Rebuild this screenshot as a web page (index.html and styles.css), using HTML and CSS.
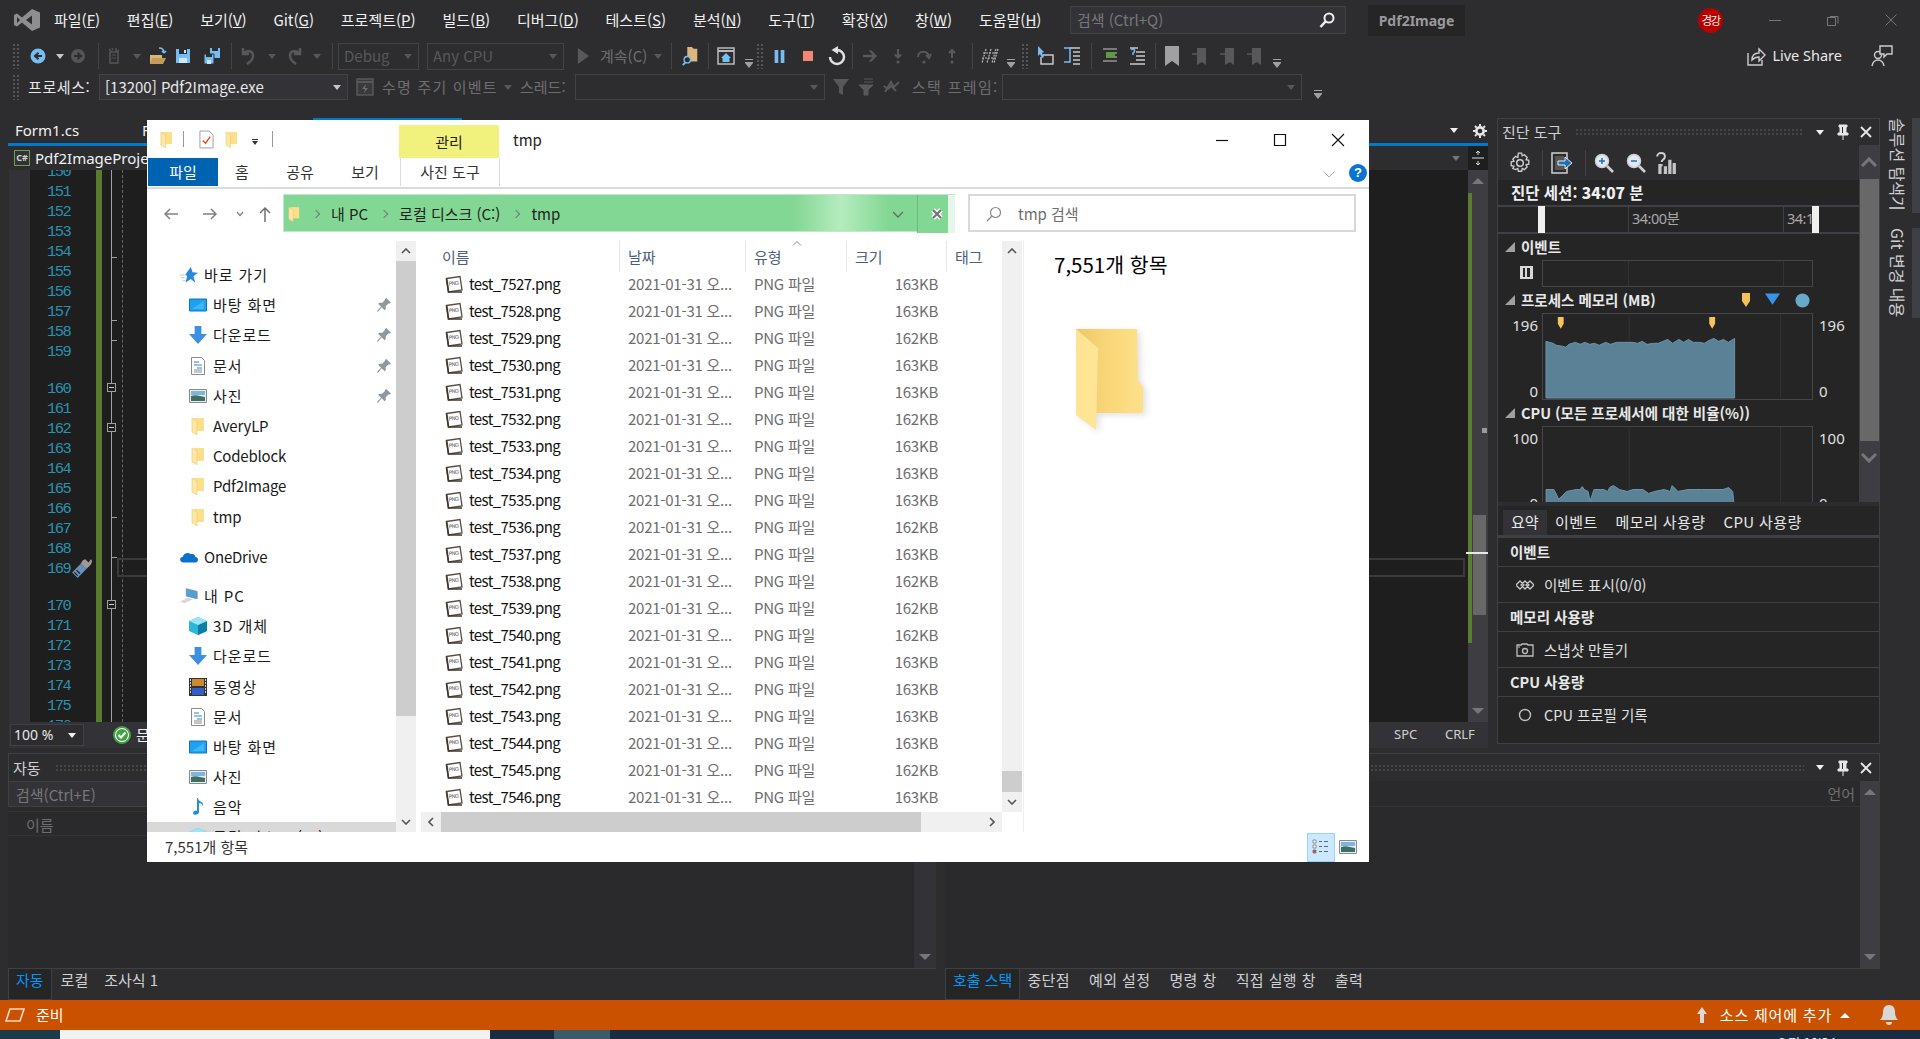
FILE: index.html
```html
<!DOCTYPE html>
<html lang="ko">
<head>
    <meta charset="UTF-8">
    <title>Pdf2Image - Microsoft Visual Studio</title>
    <link rel="stylesheet" href="styles.css">
</head>
<body>
<svg class="defs" aria-hidden="true">
    <defs>
        <linearGradient id="fold-back" x1="0" x2="1" y1="0" y2="0"><stop offset="0" stop-color="#eec766"/><stop offset=".45" stop-color="#f8d678"/><stop offset="1" stop-color="#ffe08a"/></linearGradient>
    </defs>
    <symbol id="i-vs" viewBox="0 0 26 22"><path fill="#8e8e90" d="M18 0l8 3.500v15L18 22 8 13.500 3 17.500 0 16V6l3-1.500 5 4zM3 8v6l3-3zm15-1.500L12 11l6 4.500z"/></symbol>
    <symbol id="i-back" viewBox="0 0 16 16"><circle cx="8" cy="8" r="7.500" fill="#75bdf2"/><path d="M12 8H6M8.500 4.800L5 8l3.500 3.200" fill="none" stroke="#2d2d30" stroke-width="2"/></symbol>
    <symbol id="i-fwd" viewBox="0 0 16 16"><circle cx="8" cy="8" r="7" fill="#555558"/><path d="M4 8h6M7.500 4.800L11 8l-3.500 3.200" fill="none" stroke="#2d2d30" stroke-width="2"/></symbol>
    <symbol id="i-new" viewBox="0 0 16 18"><path d="M3 5h8v11H3z" fill="none" stroke="#555558" stroke-width="1.500"/><path d="M5 1l1 2M9 1v3M12 3l-2 2M2 2l2 2" stroke="#555558" stroke-width="1.500"/><path d="M5 8h4M5 11h4" stroke="#555558"/></symbol>
    <symbol id="i-open" viewBox="0 0 18 18"><path d="M1 8h12v9H1z" fill="#dcb67a"/><path d="M3 11h14l-3 6H1z" fill="#c59b58"/><path d="M10 1c3 0 5 2 5 5M15 6l-2-2m2 2l2-2" fill="none" stroke="#75bdf2" stroke-width="1.600"/></symbol>
    <symbol id="i-save" viewBox="0 0 16 16"><path d="M1 1h14v14H1z" fill="#75bdf2"/><path d="M4 1h8v5H4z" fill="#2d2d30"/><path d="M9 2h2v3H9zM4 10h8v5H4z" fill="#cfe6f8"/></symbol>
    <symbol id="i-saveall" viewBox="0 0 16 16"><path d="M6 0h10v10H6z" fill="#75bdf2"/><path d="M8 0h6v3H8z" fill="#2d2d30"/><path d="M0 6h10v10H0z" fill="#75bdf2" stroke="#2d2d30"/><path d="M2 6h6v3H2z" fill="#2d2d30"/><path d="M3 12h4v4H3z" fill="#cfe6f8"/></symbol>
    <symbol id="i-undo" viewBox="0 0 16 18"><path d="M3 1v6h6M3.500 7C6 3 13 3 13 9c0 4-3 6-6 8" fill="none" stroke="#58585b" stroke-width="2.500"/></symbol>
    <symbol id="i-redo" viewBox="0 0 16 18"><path d="M13 1v6H7M12.500 7C10 3 3 3 3 9c0 4 3 6 6 8" fill="none" stroke="#58585b" stroke-width="2.500"/></symbol>
    <symbol id="i-play" viewBox="0 0 16 18"><path d="M3 1l11 8-11 8z" fill="#58585b"/></symbol>
    <symbol id="i-find" viewBox="0 0 18 22"><path d="M6 1h5l2 2h4v14H6z" fill="#dcb67a"/><circle cx="6" cy="15" r="3.500" fill="#2d2d30" stroke="#75bdf2" stroke-width="1.500"/><path d="M4 18l-3 3" stroke="#75bdf2" stroke-width="2"/></symbol>
    <symbol id="i-browser" viewBox="0 0 18 18"><path d="M1 1h16v16H1z" fill="none" stroke="#bbb" stroke-width="1.500"/><path d="M1 4h16" stroke="#bbb" stroke-width="2"/><path d="M9 6l-5 5h1.500v4h7v-4H14z" fill="#75bdf2"/></symbol>
    <symbol id="i-pause" viewBox="0 0 16 16"><path d="M2 0h4.500v16H2zM9.500 0H14v16H9.500z" fill="#75bdf2"/></symbol>
    <symbol id="i-stop" viewBox="0 0 16 16"><path d="M0 0h16v16H0z" fill="#f48771"/></symbol>
    <symbol id="i-restart" viewBox="0 0 18 20"><path d="M9 4a7 7 0 1 1-7 7" fill="none" stroke="#e0e0e0" stroke-width="2.500"/><path d="M3.500 4L10 0v8z" fill="#e0e0e0"/></symbol>
    <symbol id="i-right" viewBox="0 0 16 16"><path d="M1 8h12M8 2.500L13.500 8 8 13.500" fill="none" stroke="#58585b" stroke-width="2.400"/></symbol>
    <symbol id="i-down" viewBox="0 0 16 16"><circle cx="8" cy="14" r="1.600" fill="#58585b"/><path d="M8 1v8M5 6.500l3 3 3-3" fill="none" stroke="#58585b" stroke-width="2"/></symbol>
    <symbol id="i-over" viewBox="0 0 16 16"><circle cx="8" cy="14" r="1.600" fill="#58585b"/><path d="M2 9c0-7 10-7 11 0M10 7l3 3 2-4" fill="none" stroke="#58585b" stroke-width="2"/></symbol>
    <symbol id="i-up" viewBox="0 0 16 16"><circle cx="8" cy="14" r="1.600" fill="#58585b"/><path d="M8 10V2M5 5l3-3 3 3" fill="none" stroke="#58585b" stroke-width="2"/></symbol>
    <symbol id="i-hatch" viewBox="0 0 18 18"><path d="M5 2L1 16M10 2L6 16M15 2l-4 14M17 2l-4 14M2 6h15M1 11h15" stroke="#b8b8b8" stroke-width="1.200" stroke-dasharray="2 1" fill="none"/></symbol>
    <symbol id="i-thread" viewBox="0 0 18 20"><path d="M2 0l6 6-2 1 2 4-2 1-2-4-2 2z" fill="#75bdf2"/><path d="M7 9h10v9H5v-7" fill="none" stroke="#c8c8c8" stroke-width="1.500"/></symbol>
    <symbol id="i-frames" viewBox="0 0 18 20"><path d="M1 2h6v14H1" fill="none" stroke="#75bdf2" stroke-width="1.500"/><path d="M7 2h10M10 6h7M10 10h7M10 14h7M10 18h7" stroke="#c8c8c8" stroke-width="1.500"/></symbol>
    <symbol id="i-lines1" viewBox="0 0 16 16"><path d="M1 1h14M4 5h11M4 9h11M1 13h14" stroke="#c8c8c8" stroke-width="1.200"/><path d="M4 4h9v5H4z" fill="#5a9e3a"/></symbol>
    <symbol id="i-lines2" viewBox="0 0 16 18"><path d="M1 1h8M7 5h9M7 9h9M7 13h9M1 17h15" stroke="#c8c8c8" stroke-width="1.500"/><path d="M2 3c3-3 5 1 2 3v2" fill="none" stroke="#75bdf2" stroke-width="1.500"/></symbol>
    <symbol id="i-bookmark" viewBox="0 0 16 20"><path d="M1 0h14v20l-7-5-7 5z" fill="#a0a0a2"/></symbol>
    <symbol id="i-bmk2" viewBox="0 0 16 20"><path d="M5 2h9v17l-4-3-5 3z" fill="#58585b"/><path d="M0 8h8M5 5l3 3-3 3" fill="none" stroke="#58585b" stroke-width="1.500"/></symbol>
    <symbol id="i-share" viewBox="0 0 18 20"><path d="M1 7v12h14v-5" fill="none" stroke="#ccc" stroke-width="1.400"/><path d="M5 14c0-5 3-7 7-7V3l6 6-6 6v-4c-3 0-5 1-7 3z" fill="none" stroke="#ccc" stroke-width="1.400"/></symbol>
    <symbol id="i-feedback" viewBox="0 0 22 22"><circle cx="7" cy="10" r="3.500" fill="none" stroke="#ccc" stroke-width="1.400"/><path d="M1 21c1-5 3-6 6-6s5 1 6 6" fill="none" stroke="#ccc" stroke-width="1.400"/><path d="M9 1h12v8h-5l-3 3V9H9z" fill="#2d2d30" stroke="#ccc" stroke-width="1.400"/></symbol>
    <symbol id="i-funnel" viewBox="0 0 16 18"><path d="M0 1h16l-6 8v8l-4-2V9z" fill="#58585b"/></symbol>
    <symbol id="i-funnel2" viewBox="0 0 18 18"><path d="M1 7h14l-5 5v5H6v-5zM6 1h9M6 4h9" fill="#58585b" stroke="#58585b"/></symbol>
    <symbol id="i-hide" viewBox="0 0 18 14"><path d="M2 12L8 2l3 5 5-5M1 6l4 3 3-3 5 5" fill="none" stroke="#58585b" stroke-width="2"/></symbol>
    <symbol id="i-life" viewBox="0 0 18 18"><path d="M1 1h16v16H1z" fill="#3a3a3d" stroke="#58585b" stroke-width="1.500"/><path d="M1 4h16" stroke="#58585b" stroke-width="2"/><path d="M10 6l-4 5h3l-1 4 4-5H9z" fill="#6d6d70"/></symbol>
    <symbol id="i-pin" viewBox="0 0 12 16"><path d="M2 1h8v2H9v6h2v2H1V9h2V3H2zM6 11v5" fill="#e8e8e8" stroke="#e8e8e8"/><path d="M5 3h1v6H5z" fill="#2d2d30"/></symbol>
    <symbol id="i-x" viewBox="0 0 12 12"><path d="M1 1l10 10M11 1L1 11" stroke="#e8e8e8" stroke-width="1.800" fill="none"/></symbol>
    <symbol id="i-gear" viewBox="0 0 20 20"><circle cx="10" cy="10" r="3" fill="none" stroke="#d0d0d0" stroke-width="1.300"/><path d="M8.500 1h3l.5 2.500 2-1 2.500 2.500-1 2 2.500.5v3.500l-2.500.5 1 2-2.500 2.500-2-1-.5 2.500h-3l-.5-2.500-2 1L3.500 15l1-2L2 12.500V9l2.500-.5-1-2L6 4l2 1z" fill="none" stroke="#d0d0d0" stroke-width="1.200"/></symbol>
    <symbol id="i-gear-s" viewBox="0 0 16 16"><circle cx="8" cy="8" r="4.200" fill="none" stroke="#e8e8e8" stroke-width="3"/><path d="M8 0v16M0 8h16M2.300 2.300l11.400 11.400M13.700 2.300L2.300 13.700" stroke="#e8e8e8" stroke-width="2.200" stroke-dasharray="2.500 11 2.500 0"/></symbol>
    <symbol id="i-export" viewBox="0 0 22 22"><path d="M1 1h15v20H1z" fill="none" stroke="#cfcfcf" stroke-width="1.500"/><path d="M4 4h9v14H4z" fill="#555"/><path d="M7 9h7V5l7 6-7 6v-4H7z" fill="#1f6fb5" stroke="#eee"/></symbol>
    <symbol id="i-zoomin" viewBox="0 0 20 20"><circle cx="8" cy="8" r="6.500" fill="#dfe9f2" stroke="#d0d0d0" stroke-width="1.500"/><path d="M5 8h6M8 5v6" stroke="#1f6fb5" stroke-width="1.500"/><path d="M13 13l6 6" stroke="#d0d0d0" stroke-width="2.600"/></symbol>
    <symbol id="i-zoomout" viewBox="0 0 20 20"><circle cx="8" cy="8" r="6.500" fill="#dfe9f2" stroke="#d0d0d0" stroke-width="1.500"/><path d="M5 8h6" stroke="#1f6fb5" stroke-width="1.500"/><path d="M13 13l6 6" stroke="#d0d0d0" stroke-width="2.600"/></symbol>
    <symbol id="i-chart" viewBox="0 0 20 20"><path d="M2 4c0-4 7-4 7 0 0 3-3 3-3 5M6 11v2" fill="none" stroke="#d0d0d0" stroke-width="1.800"/><path d="M3 11h3v9H3zM8 13h3v7H8zM12 7h3v13h-3zM16 10h3v10h-3z" fill="#c4c4c4"/></symbol>
    <symbol id="i-diamonds" viewBox="0 0 18 10"><path d="M4 1l4 4-4 4-4-4zM9 1l4 4-4 4-4-4zM14 1l4 4-4 4-4-4z" fill="none" stroke="#c8c8c8" stroke-width="1.300"/></symbol>
    <symbol id="i-camera" viewBox="0 0 18 14"><path d="M1 2h4l1-1h5l1 1h5v11H1z" fill="none" stroke="#bdbdbd" stroke-width="1.300"/><circle cx="9" cy="8" r="2.500" fill="none" stroke="#bdbdbd" stroke-width="1.300"/><path d="M2 4h2" stroke="#bdbdbd"/></symbol>
    <symbol id="i-wrench" viewBox="0 0 20 20"><path d="M1 14l8-8 5 5-8 8z" fill="#6a8fb5"/><path d="M9 6l5 5 3-3c2-2 3-5 1-6l-2 3-3-3c-2 0-3 2-4 4z" fill="#9b9b9b"/><path d="M3 14l3 3M5 12l3 3" stroke="#1e1e1e"/></symbol>
    <symbol id="i-check" viewBox="0 0 18 18"><circle cx="9" cy="9" r="8" fill="#fff" stroke="#43a047" stroke-width="2"/><circle cx="9" cy="9" r="6" fill="#3ea543"/><path d="M5.500 9l2.500 2.500 4.500-5" fill="none" stroke="#fff" stroke-width="2"/></symbol>
    <symbol id="i-arrow-up" viewBox="0 0 12 16"><path d="M6 0l5 7H8v9H4V7H1z" fill="#d8d8d8"/></symbol>
    <symbol id="i-bell" viewBox="0 0 18 20"><path d="M9 0c4 0 6 3 6 7 0 3 1 6 3 8H0c2-2 3-5 3-8 0-4 2-7 6-7zM6 17h6c0 2-1 3-3 3s-3-1-3-3z" fill="#d8d8d8"/></symbol>
    <symbol id="i-ready" viewBox="0 0 20 14"><path d="M5 1h14l-4 12H1z" fill="none" stroke="#f4d9c9" stroke-width="1.600"/></symbol>
    <symbol id="i-folder" viewBox="0 0 14 18"><path d="M3 1h10v13H3z" fill="#fcdf8a"/><path d="M1 1l5 3v14l-5-3z" fill="#fbe8a8" stroke="#eec766" stroke-width=".600"/></symbol>
    <symbol id="i-bigfolder" viewBox="0 0 68 102"><path d="M0 0h60q1 0 1 1l1 50 5 7v26H20z" fill="url(#fold-back)"/><path d="M0 0l22 19-2 82L0 86z" fill="#fee596"/></symbol>
    <symbol id="i-page" viewBox="0 0 18 18"><path d="M1.500 3.500L15 1.500 17 15 3.500 17z" fill="#fff" stroke="#5a4d42" stroke-width="1.300"/><path d="M1.500 3.500L3.500 17H17" fill="none" stroke="#3f352c" stroke-width="1.700"/><text x="3.500" y="10" font-size="5.500" font-weight="700" font-family="Liberation Sans, sans-serif" fill="#8a8a8a" transform="rotate(-6 9 9)">PNG</text></symbol>
    <symbol id="i-check-doc" viewBox="0 0 16 20"><path d="M1 1h10l4 4v14H1z" fill="#fff" stroke="#9a9a9a"/><path d="M4 11l3 3 5-7" fill="none" stroke="#e04a1f" stroke-width="1.500"/></symbol>
    <symbol id="i-star" viewBox="0 0 20 18"><path d="M12 0l2 6 6 .500-5 4 2 7-5-4-6 4 2-7-2-2z" fill="#2b88d8"/><path d="M0 9h5M1 12h4M3 15h3" stroke="#9ccbf0"/></symbol>
    <symbol id="i-desktop" viewBox="0 0 18 14"><path d="M.500 1h17v12H.500z" fill="#1ea1f1" stroke="#0f75bd"/><path d="M3 11l12-8v8z" fill="#3fb7f7"/></symbol>
    <symbol id="i-dl" viewBox="0 0 16 16"><path d="M5 0h6v7h5l-8 9-8-9h5z" fill="#3d8fe0"/></symbol>
    <symbol id="i-doc" viewBox="0 0 14 18"><path d="M.500.500h10l3 3v14H.500z" fill="#fff" stroke="#8a8a8a"/><path d="M3 5h5M3 8h8M6 11h5" stroke="#2b88d8"/><path d="M3 13h8M3 15h8" stroke="#8a8a8a"/></symbol>
    <symbol id="i-pic" viewBox="0 0 18 14"><path d="M.500.500h17v13H.500z" fill="#e6eff6" stroke="#8a8a8a"/><path d="M2 2h14v4H2z" fill="#7fb5dc"/><path d="M2 7c5-2 9 0 14 1v4H2z" fill="#3f6f62"/></symbol>
    <symbol id="i-cloud" viewBox="0 0 20 14"><path d="M4 13c-5 0-5-6-1-6 1-4 6-6 9-3 3-1 5 1 5 3 4 0 4 6 0 6z" fill="#0a70c9"/></symbol>
    <symbol id="i-pc" viewBox="0 0 20 18"><path d="M7 1l12 3v8L7 9z" fill="#4ba3dc" stroke="#7a8a96"/><path d="M0 15l9-4 5 2-9 4z" fill="#d8d8d8"/></symbol>
    <symbol id="i-cube" viewBox="0 0 18 18"><path d="M9 0l9 4v10l-9 4-9-4V4z" fill="#2bb5d8"/><path d="M9 8v10l9-4V4z" fill="#0c7fa8"/><path d="M9 0l9 4-9 4-9-4z" fill="#9be6f3"/></symbol>
    <symbol id="i-film" viewBox="0 0 18 18"><path d="M0 0h18v18H0z" fill="#333"/><path d="M3 1h12v7H3z" fill="#c98b32"/><path d="M3 10h12v7H3z" fill="#2f5fc4"/><path d="M1 2h1M1 5h1M1 8h1M1 11h1M1 14h1M16 2h1M16 5h1M16 8h1M16 11h1M16 14h1" stroke="#fff" stroke-width="1.400"/></symbol>
    <symbol id="i-note" viewBox="0 0 12 18"><path d="M6 0c0 4 6 3 5 8-1-2-2-3-4-3v9c0 3-6 4-6 1 0-2 3-3 4-2V0z" fill="#1e90e0"/></symbol>
    <symbol id="i-pinned" viewBox="0 0 12 12"><path d="M8 0l4 4-1.500 1-.5-.5-2.500 2.500v2.500l-1 1L4 8 1 11.500 0 12l.5-1.500 3-3L1 5l1-1h2.500L7 1.500 6.500 1z" fill="#8f98a1"/></symbol>
    <symbol id="i-search" viewBox="0 0 16 16"><circle cx="9.500" cy="6.500" r="5" fill="none" stroke="#8a8a8a" stroke-width="1.200"/><path d="M6 10l-5 5" stroke="#8a8a8a" stroke-width="1.200"/></symbol>
    <symbol id="i-viewdetail" viewBox="0 0 18 16"><path d="M1 1h3v3H1zM1 6h3v3H1z" fill="#fff" stroke="#777" stroke-width=".800"/><path d="M1 11h3v3H1z" fill="#d44" stroke="#777" stroke-width=".800"/><path d="M7 2.500h3M12 2.500h4M7 7.500h3M12 7.500h4M7 12.500h3M12 12.500h4" stroke="#666"/></symbol>
</svg>

<header class="titlebar">
    <svg class="vs-logo"><use href="#i-vs"/></svg>
    <nav class="menu">
        <span>파일(<u>F</u>)</span><span>편집(<u>E</u>)</span><span>보기(<u>V</u>)</span><span>Git(<u>G</u>)</span><span>프로젝트(<u>P</u>)</span><span>빌드(<u>B</u>)</span><span>디버그(<u>D</u>)</span><span>테스트(<u>S</u>)</span><span>분석(<u>N</u>)</span><span>도구(<u>T</u>)</span><span>확장(<u>X</u>)</span><span>창(<u>W</u>)</span><span>도움말(<u>H</u>)</span>
    </nav>
    <div class="quick-search"><span>검색 (Ctrl+Q)</span><svg class="ic16" viewBox="0 0 16 16"><circle cx="10" cy="6" r="4.500" fill="none" stroke="#f0f0f0" stroke-width="2"/><path d="M6.500 9.500L1.500 15" stroke="#f0f0f0" stroke-width="2.600"/></svg></div>
    <div class="sln-name">Pdf2Image</div>
    <div class="avatar">경강</div>
    <div class="win-btns">
        <svg viewBox="0 0 12 12"><path d="M0 6.500h12" stroke="#77777a"/></svg>
        <svg viewBox="0 0 12 12"><path d="M3 2.500h8v7M.500 3.500h8v8h-8z" fill="none" stroke="#77777a"/></svg>
        <svg viewBox="0 0 12 12"><path d="M.500.500l11 11M11.500.500l-11 11" stroke="#77777a"/></svg>
    </div>
</header>

<div class="toolbar row-a">
    <span class="grip"></span>
    <span class="tb w36"><svg class="ic16"><use href="#i-back"/></svg></span>
    <span class="tb w8"><i class="caret"></i></span>
    <span class="tb w28"><svg class="ic16"><use href="#i-fwd"/></svg></span>
    <span class="tb w12"><i class="sep"></i></span>
    <span class="tb w22"><svg class="ic18"><use href="#i-new"/></svg></span>
    <span class="tb w22"><i class="caret dim"></i></span>
    <span class="tb w20"><svg class="ic18"><use href="#i-open"/></svg></span>
    <span class="tb w30"><svg class="ic16"><use href="#i-save"/></svg></span>
    <span class="tb w28"><svg class="ic16"><use href="#i-saveall"/></svg></span>
    <span class="tb w10"><i class="sep"></i></span>
    <span class="tb w24"><svg class="ic18"><use href="#i-undo"/></svg></span>
    <span class="tb w24"><i class="caret dim"></i></span>
    <span class="tb w22"><svg class="ic18"><use href="#i-redo"/></svg></span>
    <span class="tb w22"><i class="caret dim"></i></span>
    <span class="tb w8"><i class="sep"></i></span>
    <div class="combo disabled debug-combo"><span>Debug</span><i class="caret dim"></i></div>
    <div class="combo disabled cpu-combo"><span>Any CPU</span><i class="caret dim"></i></div>
    <span class="tb w28 play"><svg class="ic18"><use href="#i-play"/></svg></span>
    <span class="tb-text dim-text cont">계속(C)</span>
    <span class="tb w20"><i class="caret dim"></i></span>
    <span class="tb w6"><i class="sep"></i></span>
    <span class="tb w32"><svg class="ic20"><use href="#i-find"/></svg></span>
    <span class="tb w4"><i class="sep"></i></span>
    <span class="tb w32"><svg class="ic18"><use href="#i-browser"/></svg></span>
    <span class="tb w14"><i class="more"></i></span>
    <span class="tb w8"><span class="grip"></span></span>
    <span class="tb w30"><svg class="ic13"><use href="#i-pause"/></svg></span>
    <span class="tb w28"><svg class="ic10"><use href="#i-stop"/></svg></span>
    <span class="tb w29"><svg class="ic20"><use href="#i-restart"/></svg></span>
    <span class="tb w2"><i class="sep"></i></span>
    <span class="tb w34"><svg class="ic16"><use href="#i-right"/></svg></span>
    <span class="tb w22"><svg class="ic16"><use href="#i-down"/></svg></span>
    <span class="tb w30"><svg class="ic16"><use href="#i-over"/></svg></span>
    <span class="tb w26"><svg class="ic16"><use href="#i-up"/></svg></span>
    <span class="tb w14"><i class="sep"></i></span>
    <span class="tb w22"><svg class="ic18"><use href="#i-hatch"/></svg></span>
    <span class="tb w20"><i class="more"></i></span>
    <span class="tb w8"><span class="grip"></span></span>
    <span class="tb w32"><svg class="ic20"><use href="#i-thread"/></svg></span>
    <span class="tb w22"><svg class="ic20"><use href="#i-frames"/></svg></span>
    <span class="tb w16"><i class="sep"></i></span>
    <span class="tb w22"><svg class="ic16"><use href="#i-lines1"/></svg></span>
    <span class="tb w32"><svg class="ic18"><use href="#i-lines2"/></svg></span>
    <span class="tb w4"><i class="sep"></i></span>
    <span class="tb w30"><svg class="ic20"><use href="#i-bookmark"/></svg></span>
    <span class="tb w26"><svg class="ic20"><use href="#i-bmk2"/></svg></span>
    <span class="tb w30"><svg class="ic20"><use href="#i-bmk2"/></svg></span>
    <span class="tb w24"><svg class="ic20"><use href="#i-bmk2"/></svg></span>
    <span class="tb w20"><i class="more"></i></span>
    <div class="live-share">
        <svg class="ic20"><use href="#i-share"/></svg><span>Live Share</span>
        <svg class="ic22"><use href="#i-feedback"/></svg>
    </div>
</div>

<div class="toolbar row-b">
    <span class="grip"></span>
    <span class="tb-text proc-label">프로세스:</span>
    <div class="combo proc-combo"><span>[13200] Pdf2Image.exe</span><i class="caret"></i></div>
    <span class="tb w34"><svg class="ic18"><use href="#i-life"/></svg></span>
    <span class="tb-text dim-text life-label">수명 주기 이벤트</span>
    <span class="tb w20"><i class="caret dim"></i></span>
    <span class="tb-text dim-text thread-label">스레드:</span>
    <div class="combo disabled thread-combo"><i class="caret dim"></i></div>
    <span class="tb w28"><svg class="ic18"><use href="#i-funnel"/></svg></span>
    <span class="tb w24"><svg class="ic18"><use href="#i-funnel2"/></svg></span>
    <span class="tb w26"><svg class="ic18"><use href="#i-hide"/></svg></span>
    <span class="tb-text dim-text frame-label">스택 프레임:</span>
    <div class="combo disabled frame-combo"><i class="caret dim"></i></div>
    <span class="tb w28"><i class="more"></i></span>
</div>

<main class="workspace">
    <div class="upper">
        <section class="doc-well">
            <div class="doc-tabs">
                <span class="doc-tab">Form1.cs</span>
                <span class="doc-tab second">Fo</span>
                <span class="active-mark"></span>
                <span class="doc-tools"><i class="caret light"></i><svg class="ic14"><use href="#i-gear-s"/></svg></span>
            </div>
            <div class="doc-rule"></div>
            <div class="nav-bar">
                <span class="cs-icon">C#</span>
                <span>Pdf2ImageProject</span>
                <i class="caret nav-caret"></i>
                <span class="split-btn"><svg viewBox="0 0 14 16" class="ic16"><path d="M1 8h12M7 1v4M5 3l2-2 2 2M7 15v-4M5 13l2 2 2-2" fill="none" stroke="#ddd"/></svg></span>
            </div>
            <div class="editor">
                <div class="ind-margin"></div>
                <div class="gutter">
                    <div class="lines">
                        <span>150</span><span>151</span><span>152</span><span>153</span><span>154</span><span>155</span><span>156</span><span>157</span><span>158</span><span>159</span>
                        <span class="after-lens">160</span><span>161</span><span>162</span><span>163</span><span>164</span><span>165</span><span>166</span><span>167</span><span>168</span><span>169</span>
                        <span class="after-lens">170</span><span>171</span><span>172</span><span>173</span><span>174</span><span>175</span><span>176</span>
                    </div>
                    <svg class="wrench"><use href="#i-wrench"/></svg>
                </div>
                <div class="change-bar"></div>
                <div class="outline">
                    <i class="tick t1"></i><i class="tick t2"></i><i class="tick t3"></i><i class="tick t4"></i><i class="tick t5"></i>
                    <b class="fold f1"></b><b class="fold f2"></b><b class="fold f3"></b>
                </div>
                <div class="code"><div class="line-box"></div></div>
                <div class="ed-scroll">
                    <i class="tri-up"></i>
                    <span class="ed-green"></span>
                    <span class="ed-thumb"></span>
                    <span class="ed-dot"></span>
                    <span class="ed-caret"></span>
                    <i class="tri-down"></i>
                </div>
            </div>
            <div class="ed-status">
                <div class="zoom-box"><span>100 %</span><i class="caret light"></i></div>
                <svg class="ic18 ok-icon"><use href="#i-check"/></svg><span class="ok-text">문</span>
                <span class="eol">SPC</span><span class="eol crlf">CRLF</span>
            </div>
        </section>

        <aside class="diag">
            <div class="pane-head">
                <span class="pane-title">진단 도구</span><span class="dots"></span>
                <i class="caret light"></i>
                <svg class="pin"><use href="#i-pin"/></svg>
                <svg class="close"><use href="#i-x"/></svg>
            </div>
            <div class="diag-body">
                <div class="diag-left">
                    <div class="diag-tools">
                        <svg class="ic22 g1"><use href="#i-gear"/></svg><i class="sep"></i>
                        <svg class="ic22 g2"><use href="#i-export"/></svg><i class="sep"></i>
                        <svg class="ic20 g3"><use href="#i-zoomin"/></svg>
                        <svg class="ic20 g4"><use href="#i-zoomout"/></svg>
                        <svg class="ic22 g5"><use href="#i-chart"/></svg>
                    </div>
                    <div class="session">진단 세션: <b>34:07</b> 분</div>
                    <div class="ruler">
                        <span class="ruler-l1">34:00분</span><span class="ruler-l2">34:1</span>
                        <i class="handle h1"></i><i class="handle h2"></i>
                    </div>
                    <div class="track-head"><i class="open-tri"></i>이벤트</div>
                    <div class="track track-ev">
                        <span class="ev-icon"></span>
                        <div class="plot ev-plot"></div>
                    </div>
                    <div class="track-head mem-head"><i class="open-tri"></i>프로세스 메모리 (MB)
                        <span class="legend">
                            <svg viewBox="0 0 8 14" class="lg-tag"><path d="M0 0h8v8l-4 6-4-6z" fill="#f5c35c"/></svg>
                            <svg viewBox="0 0 16 12" class="lg-tri"><path d="M0 0h16l-8 12z" fill="#3794e8"/></svg>
                            <svg viewBox="0 0 16 16" class="lg-dot"><circle cx="8" cy="8" r="7.500" fill="#68a8c8"/></svg>
                        </span>
                    </div>
                    <div class="track track-mem">
                        <div class="axis left"><span>196</span><span>0</span></div>
                        <svg class="plot mem-plot" viewBox="0 0 271 87">
                            <path d="M86 0v86M241 0v86" stroke="#333336"/>
                            <path transform="scale(.815 1)" d="M1 28L10 30 14 32 22 33 26 34 30 31 38 29 44 31 50 29 56 31 62 30 68 32 76 29 82 31 90 29 100 29 110 29 116 30 122 28 128 31 136 30 142 30 148 28 154 26 160 30 168 26 174 29 180 26 186 29 194 29 200 30 206 27 212 25 218 28 224 26 230 29 236 26 238 25 V86 H1z" fill="#5b8197" stroke="#6e97ad"/>
                            <path d="M13 3h6v7l-3 5-3-5zM168 3h6v7l-3 5-3-5z" fill="#f5c35c"/>
                        </svg>
                        <div class="axis right"><span>196</span><span>0</span></div>
                    </div>
                    <div class="track-head cpu-head"><i class="open-tri"></i>CPU (모든 프로세서에 대한 비율(%))</div>
                    <div class="track track-cpu">
                        <div class="axis left"><span>100</span><span>0</span></div>
                        <svg class="plot cpu-plot" viewBox="0 0 271 87">
                            <path d="M86 0v86M241 0v86" stroke="#333336"/>
                            <path d="M1 64L9 64 14 74 22 66 32 64 36 64 38 61 40 64 44 66 46 76 50 64 60 64 64 66 66 62 70 60 76 64 84 66 90 64 100 64 106 68 112 66 122 64 128 66 130 60 136 66 146 64 160 64 182 64 188 62 192 66 194 86 H1z" fill="#5b8197" stroke="#6e97ad"/>
                        </svg>
                        <div class="axis right"><span>100</span><span>0</span></div>
                    </div>
                </div>
                <div class="diag-scroll">
                    <svg viewBox="0 0 16 10" class="chev"><path d="M1 9l7-7 7 7" fill="none" stroke="#77777a" stroke-width="3"/></svg>
                    <span class="diag-thumb"></span>
                    <svg viewBox="0 0 16 10" class="chev"><path d="M1 1l7 7 7-7" fill="none" stroke="#77777a" stroke-width="3"/></svg>
                </div>
            </div>
            <div class="diag-summary">
                <div class="sum-tabs">
                    <span class="on">요약</span><span>이벤트</span><span>메모리 사용량</span><span>CPU 사용량</span>
                </div>
                <div class="sum-head">이벤트</div>
                <div class="sum-row"><svg class="sum-ic"><use href="#i-diamonds"/></svg>이벤트 표시(0/0)</div>
                <div class="sum-head">메모리 사용량</div>
                <div class="sum-row"><svg class="sum-ic"><use href="#i-camera"/></svg>스냅샷 만들기</div>
                <div class="sum-head">CPU 사용량</div>
                <div class="sum-row no-line"><svg class="sum-ic" viewBox="0 0 18 14"><circle cx="9" cy="7" r="5.500" fill="none" stroke="#bdbdbd" stroke-width="1.400"/></svg>CPU 프로필 기록</div>
            </div>
        </aside>

        <div class="side-tabs">
            <span class="side-tab one">솔루션 탐색기</span>
            <span class="side-tab two">Git 변경 내용</span>
        </div>
    </div>

    <div class="lower">
        <section class="tool-pane auto-pane">
            <div class="pane-head"><span class="pane-title">자동</span><span class="dots"></span></div>
            <div class="auto-search">검색(Ctrl+E)</div>
            <div class="auto-body">
                <div class="col-head"><span>이름</span></div>
                <div class="pane-scroll"><i class="tri-down"></i></div>
            </div>
            <div class="pane-tabs">
                <span class="on">자동</span><span>로컬</span><span>조사식 1</span>
            </div>
        </section>
        <section class="tool-pane stack-pane">
            <div class="pane-head">
                <span class="dots"></span>
                <i class="caret light"></i>
                <svg class="pin"><use href="#i-pin"/></svg>
                <svg class="close"><use href="#i-x"/></svg>
            </div>
            <div class="stack-body">
                <div class="stack-main"><div class="col-head lang"><span>언어</span></div></div>
                <div class="pane-scroll tall"><i class="tri-up"></i><i class="tri-down"></i></div>
            </div>
            <div class="pane-tabs">
                <span class="on">호출 스택</span><span>중단점</span><span>예외 설정</span><span>명령 창</span><span>직접 실행 창</span><span>출력</span>
            </div>
        </section>
    </div>
</main>

<footer class="statusbar">
    <svg class="ready-ic"><use href="#i-ready"/></svg>
    <span class="ready">준비</span>
    <svg class="up-ic"><use href="#i-arrow-up"/></svg>
    <span class="src">소스 제어에 추가</span>
    <i class="caret-up"></i>
    <svg class="bell"><use href="#i-bell"/></svg>
</footer>
<div class="taskbar">
    <span class="tk-start"></span><span class="tk-search"></span><span class="tk-gap"></span><span class="tk-active"></span>
    <span class="tk-clock">오전 10:34</span>
</div>

<!-- 탐색기 창 -->
<section class="explorer">
    <div class="ex-title">
        <svg class="qa-folder"><use href="#i-folder"/></svg>
        <i class="qa-sep"></i>
        <svg class="qa-doc"><use href="#i-check-doc"/></svg>
        <svg class="qa-folder two"><use href="#i-folder"/></svg>
        <i class="qa-caret"></i>
        <i class="qa-sep last"></i>
        <span class="manage">관리</span>
        <span class="ex-name">tmp</span>
        <div class="ex-win">
            <svg viewBox="0 0 14 14"><path d="M1 7.500h12" stroke="#111" stroke-width="1.200"/></svg>
            <svg viewBox="0 0 14 14"><path d="M1.500 1.500h11v11h-11z" fill="none" stroke="#111" stroke-width="1.200"/></svg>
            <svg viewBox="0 0 14 14"><path d="M1 1l12 12M13 1L1 13" stroke="#111" stroke-width="1.100"/></svg>
        </div>
    </div>
    <div class="ex-ribbon">
        <span class="rb on">파일</span><span class="rb home">홈</span><span class="rb share">공유</span><span class="rb view">보기</span>
        <span class="rb photo">사진 도구</span>
        <svg class="rb-chev" viewBox="0 0 12 7"><path d="M.500.500L6 6l5.500-5.500" fill="none" stroke="#aaa"/></svg>
        <span class="help">?</span>
    </div>
    <div class="ex-addr">
        <div class="nav-btns">
            <svg viewBox="0 0 16 14" class="nb back"><path d="M15 7H2M7 2L2 7l5 5" fill="none" stroke="#808080" stroke-width="1.500"/></svg>
            <svg viewBox="0 0 16 14" class="nb fwd"><path d="M1 7h13M9 2l5 5-5 5" fill="none" stroke="#808080" stroke-width="1.500"/></svg>
            <svg viewBox="0 0 8 6" class="nb drop"><path d="M1 1l3 3.500L7 1" fill="none" stroke="#808080" stroke-width="1.200"/></svg>
            <svg viewBox="0 0 12 16" class="nb up"><path d="M6 16V2M1 7l5-5 5 5" fill="none" stroke="#707070" stroke-width="1.500"/></svg>
        </div>
        <div class="addr-bar">
            <svg class="addr-folder"><use href="#i-folder"/></svg>
            <i class="crumb"></i><span>내 PC</span><i class="crumb"></i><span>로컬 디스크 (C:)</span><i class="crumb"></i><span>tmp</span>
            <svg viewBox="0 0 12 7" class="addr-drop"><path d="M1 1l5 5 5-5" fill="none" stroke="#666" stroke-width="1.300"/></svg>
            <span class="addr-x"><svg viewBox="0 0 14 14"><path d="M3 3l8 8M11 3l-8 8" stroke="#fff" stroke-width="5"/><path d="M3 3l8 8M11 3l-8 8" stroke="#777" stroke-width="2.400"/></svg></span>
        </div>
        <div class="ex-search"><svg class="ic16"><use href="#i-search"/></svg><span>tmp 검색</span></div>
    </div>
    <div class="ex-main">
        <div class="tree">
            <div class="tree-row top"><svg class="tic"><use href="#i-star"/></svg>바로 가기</div>
            <div class="tree-row"><svg class="tic"><use href="#i-desktop"/></svg>바탕 화면<svg class="pinned"><use href="#i-pinned"/></svg></div>
            <div class="tree-row"><svg class="tic"><use href="#i-dl"/></svg>다운로드<svg class="pinned"><use href="#i-pinned"/></svg></div>
            <div class="tree-row"><svg class="tic"><use href="#i-doc"/></svg>문서<svg class="pinned"><use href="#i-pinned"/></svg></div>
            <div class="tree-row"><svg class="tic"><use href="#i-pic"/></svg>사진<svg class="pinned"><use href="#i-pinned"/></svg></div>
            <div class="tree-row en"><svg class="tic"><use href="#i-folder"/></svg>AveryLP</div>
            <div class="tree-row en"><svg class="tic"><use href="#i-folder"/></svg>Codeblock</div>
            <div class="tree-row en"><svg class="tic"><use href="#i-folder"/></svg>Pdf2Image</div>
            <div class="tree-row en"><svg class="tic"><use href="#i-folder"/></svg>tmp</div>
            <div class="tree-row top drive en"><svg class="tic"><use href="#i-cloud"/></svg>OneDrive</div>
            <div class="tree-row top mypc"><svg class="tic"><use href="#i-pc"/></svg>내 PC</div>
            <div class="tree-row"><svg class="tic"><use href="#i-cube"/></svg>3D 개체</div>
            <div class="tree-row"><svg class="tic"><use href="#i-dl"/></svg>다운로드</div>
            <div class="tree-row"><svg class="tic"><use href="#i-film"/></svg>동영상</div>
            <div class="tree-row"><svg class="tic"><use href="#i-doc"/></svg>문서</div>
            <div class="tree-row"><svg class="tic"><use href="#i-desktop"/></svg>바탕 화면</div>
            <div class="tree-row"><svg class="tic"><use href="#i-pic"/></svg>사진</div>
            <div class="tree-row"><svg class="tic"><use href="#i-note"/></svg>음악</div>
            <div class="tree-row sel"><svg class="tic"><use href="#i-cube"/></svg>로컬 디스크 (C:)</div>
        </div>
        <div class="vbar tree-bar">
            <svg viewBox="0 0 10 6" class="sb-arrow"><path d="M1 5l4-4 4 4" fill="none" stroke="#555" stroke-width="1.600"/></svg>
            <span class="vthumb tree-thumb"></span>
            <svg viewBox="0 0 10 6" class="sb-arrow"><path d="M1 1l4 4 4-4" fill="none" stroke="#555" stroke-width="1.600"/></svg>
        </div>
        <div class="list-wrap">
            <div class="list">
                <div class="list-head">
                    <span>이름</span><span>날짜</span><span>유형<svg viewBox="0 0 10 5" class="sort"><path d="M1 4.500L5 .500l4 4" fill="none" stroke="#888"/></svg></span><span>크기</span><span>태그</span>
                </div>
                <div class="file"><span class="fname"><svg class="fic"><use href="#i-page"/></svg>test_7527.png</span><span>2021-01-31 오...</span><span>PNG 파일</span><span class="fsize">163KB</span></div>
                <div class="file"><span class="fname"><svg class="fic"><use href="#i-page"/></svg>test_7528.png</span><span>2021-01-31 오...</span><span>PNG 파일</span><span class="fsize">163KB</span></div>
                <div class="file"><span class="fname"><svg class="fic"><use href="#i-page"/></svg>test_7529.png</span><span>2021-01-31 오...</span><span>PNG 파일</span><span class="fsize">162KB</span></div>
                <div class="file"><span class="fname"><svg class="fic"><use href="#i-page"/></svg>test_7530.png</span><span>2021-01-31 오...</span><span>PNG 파일</span><span class="fsize">163KB</span></div>
                <div class="file"><span class="fname"><svg class="fic"><use href="#i-page"/></svg>test_7531.png</span><span>2021-01-31 오...</span><span>PNG 파일</span><span class="fsize">163KB</span></div>
                <div class="file"><span class="fname"><svg class="fic"><use href="#i-page"/></svg>test_7532.png</span><span>2021-01-31 오...</span><span>PNG 파일</span><span class="fsize">162KB</span></div>
                <div class="file"><span class="fname"><svg class="fic"><use href="#i-page"/></svg>test_7533.png</span><span>2021-01-31 오...</span><span>PNG 파일</span><span class="fsize">163KB</span></div>
                <div class="file"><span class="fname"><svg class="fic"><use href="#i-page"/></svg>test_7534.png</span><span>2021-01-31 오...</span><span>PNG 파일</span><span class="fsize">163KB</span></div>
                <div class="file"><span class="fname"><svg class="fic"><use href="#i-page"/></svg>test_7535.png</span><span>2021-01-31 오...</span><span>PNG 파일</span><span class="fsize">163KB</span></div>
                <div class="file"><span class="fname"><svg class="fic"><use href="#i-page"/></svg>test_7536.png</span><span>2021-01-31 오...</span><span>PNG 파일</span><span class="fsize">162KB</span></div>
                <div class="file"><span class="fname"><svg class="fic"><use href="#i-page"/></svg>test_7537.png</span><span>2021-01-31 오...</span><span>PNG 파일</span><span class="fsize">163KB</span></div>
                <div class="file"><span class="fname"><svg class="fic"><use href="#i-page"/></svg>test_7538.png</span><span>2021-01-31 오...</span><span>PNG 파일</span><span class="fsize">162KB</span></div>
                <div class="file"><span class="fname"><svg class="fic"><use href="#i-page"/></svg>test_7539.png</span><span>2021-01-31 오...</span><span>PNG 파일</span><span class="fsize">162KB</span></div>
                <div class="file"><span class="fname"><svg class="fic"><use href="#i-page"/></svg>test_7540.png</span><span>2021-01-31 오...</span><span>PNG 파일</span><span class="fsize">162KB</span></div>
                <div class="file"><span class="fname"><svg class="fic"><use href="#i-page"/></svg>test_7541.png</span><span>2021-01-31 오...</span><span>PNG 파일</span><span class="fsize">163KB</span></div>
                <div class="file"><span class="fname"><svg class="fic"><use href="#i-page"/></svg>test_7542.png</span><span>2021-01-31 오...</span><span>PNG 파일</span><span class="fsize">163KB</span></div>
                <div class="file"><span class="fname"><svg class="fic"><use href="#i-page"/></svg>test_7543.png</span><span>2021-01-31 오...</span><span>PNG 파일</span><span class="fsize">163KB</span></div>
                <div class="file"><span class="fname"><svg class="fic"><use href="#i-page"/></svg>test_7544.png</span><span>2021-01-31 오...</span><span>PNG 파일</span><span class="fsize">163KB</span></div>
                <div class="file"><span class="fname"><svg class="fic"><use href="#i-page"/></svg>test_7545.png</span><span>2021-01-31 오...</span><span>PNG 파일</span><span class="fsize">162KB</span></div>
                <div class="file"><span class="fname"><svg class="fic"><use href="#i-page"/></svg>test_7546.png</span><span>2021-01-31 오...</span><span>PNG 파일</span><span class="fsize">163KB</span></div>
            </div>
            <div class="hbar">
                <svg viewBox="0 0 6 10" class="sb-arrow h"><path d="M5 1L1 5l4 4" fill="none" stroke="#555" stroke-width="1.600"/></svg>
                <span class="hthumb"></span>
                <svg viewBox="0 0 6 10" class="sb-arrow h"><path d="M1 1l4 4-4 4" fill="none" stroke="#555" stroke-width="1.600"/></svg>
            </div>
        </div>
        <div class="vbar list-bar">
            <svg viewBox="0 0 10 6" class="sb-arrow"><path d="M1 5l4-4 4 4" fill="none" stroke="#555" stroke-width="1.600"/></svg>
            <span class="list-space"></span>
            <span class="vthumb list-thumb"></span>
            <svg viewBox="0 0 10 6" class="sb-arrow"><path d="M1 1l4 4 4-4" fill="none" stroke="#555" stroke-width="1.600"/></svg>
        </div>
        <div class="details">
            <div class="det-count">7,551개 항목</div>
            <svg class="det-folder"><use href="#i-bigfolder"/></svg>
        </div>
    </div>
    <div class="ex-status">
        <span>7,551개 항목</span>
        <span class="view-btn on"><svg class="ic18"><use href="#i-viewdetail"/></svg></span>
        <span class="view-btn"><svg class="ic18"><use href="#i-pic"/></svg></span>
    </div>
</section>
</body>
</html>
```
FILE: styles.css
```css
* { box-sizing: border-box; }
html, body { margin: 0; height: 100%; }
body {
    width: 1920px;
    height: 1039px;
    overflow: hidden;
    position: relative;
    display: flex;
    flex-direction: column;
    background: #2d2d30;
    color: #f1f1f1;
    font-family: "Noto Sans CJK KR", "Noto Sans", sans-serif;
    font-size: 15px;
    line-height: 1.2;
}
svg { display: block; flex: none; }
i { font-style: normal; }
.defs { position: absolute; width: 0; height: 0; }
.ic10 { width: 10px; height: 10px; }
.ic13 { width: 13px; height: 13px; }
.ic14 { width: 14px; height: 14px; }
.ic16 { width: 16px; height: 16px; }
.ic18 { width: 18px; height: 18px; }
.ic20 { width: 20px; height: 20px; }
.ic22 { width: 22px; height: 22px; }

/* 타이틀바 */
.titlebar { height: 40px; display: flex; align-items: center; flex: none; }
.vs-logo { width: 26px; height: 22px; margin-left: 14px; }
.menu { display: flex; gap: 26.800px; margin-left: 14px; width: 1016px; }
.menu span { white-space: nowrap; }
.quick-search {
    width: 276px; height: 28px; display: flex; align-items: center; justify-content: space-between;
    padding: 0 10px 0 6px; background: #333337; border: 1px solid #434346; color: #77777a;
}
.sln-name {
    width: 97px; height: 31px; margin-left: 22px; background: #252526; color: #9a9a9c;
    font-weight: 700; font-size: 14px; text-align: center; line-height: 31px;
    font-family: "Noto Sans", sans-serif;
}
.avatar {
    width: 25px; height: 25px; border-radius: 50%; margin-left: 233px; background: #b80000;
    font-size: 11.500px; line-height: 25px; text-align: center; white-space: nowrap;
    letter-spacing: -1.500px;
}
.win-btns { display: flex; gap: 46px; margin-left: 46px; }
.win-btns svg { width: 12px; height: 12px; }

/* 툴바 */
.toolbar { display: flex; align-items: center; flex: none; padding-left: 12px; }
.row-a { height: 32px; }
.row-b { height: 28px; padding-top: 2px; }
.grip {
    width: 8px; height: 26px; flex: none;
    background-image: radial-gradient(#555558 1px, transparent 1.200px);
    background-size: 4px 4px;
}
.tb { display: flex; align-items: center; justify-content: center; height: 28px; flex: none; }
.w2 { width: 2px; } .w4 { width: 4px; } .w6 { width: 6px; } .w8 { width: 8px; }
.w10 { width: 10px; } .w12 { width: 12px; } .w14 { width: 14px; } .w16 { width: 16px; }
.w20 { width: 20px; } .w22 { width: 22px; } .w24 { width: 24px; } .w26 { width: 26px; }
.w28 { width: 28px; } .w29 { width: 29px; } .w30 { width: 30px; } .w32 { width: 32px; }
.w34 { width: 34px; } .w36 { width: 36px; }
.sep { width: 1px; height: 26px; background: #434346; flex: none; display: block; }
.caret {
    display: block; flex: none; width: 0; height: 0;
    border-left: 4px solid transparent; border-right: 4px solid transparent; border-top: 5px solid #c8c8c8;
}
.caret.dim { border-top-color: #58585b; }
.caret.light { border-top-color: #f0f0f0; }
.more { display: block; width: 8px; height: 9px; background: linear-gradient(#a0a0a2 0 1px, transparent 1px 3px, #a0a0a2 3px 4px, transparent 4px); position: relative; top: 7px; }
.more::after { content: ""; position: absolute; left: 0; top: 4px; border-left: 4px solid transparent; border-right: 4px solid transparent; border-top: 5px solid #a0a0a2; }
.combo {
    display: flex; align-items: center; justify-content: space-between; flex: none;
    background: #333337; border: 1px solid #434346; padding: 0 6px 0 5px; white-space: nowrap;
}
.combo.disabled { background: transparent; color: #58585b; }
.debug-combo { width: 81px; height: 27px; margin-left: 2px; }
.cpu-combo { width: 137px; height: 27px; margin-left: 8px; }
.play { margin-left: 5px; }
.tb-text { white-space: nowrap; flex: none; }
.dim-text { color: #6d6d70; }
.cont { width: 48px; margin-left: 3px; }
.proc-label { width: 66px; margin-left: 8px; color: #e8e8e8; letter-spacing: .6px; }
.proc-combo { width: 249px; height: 26px; margin-left: 5px; color: #e8e8e8; }
.life-label { width: 116px; margin-left: 0; letter-spacing: 1.200px; }
.thread-label { width: 46px; margin-left: 2px; }
.thread-combo { width: 250px; height: 26px; margin-left: 9px; justify-content: flex-end; }
.row-b .w28 { margin-left: 2px; }
.frame-label { width: 85px; margin-left: 7px; letter-spacing: 1.300px; }
.frame-combo { width: 300px; height: 26px; margin-left: 5px; justify-content: flex-end; }
.live-share { margin-left: auto; display: flex; align-items: center; gap: 6px; padding-right: 27px; color: #e8e8e8; font-size: 14.500px; font-family: "Noto Sans", sans-serif; }
.live-share .ic22 { margin-left: 23px; }

/* 작업 영역 */
.workspace { flex: 1; display: flex; flex-direction: column; min-height: 0; }
.upper { height: 648px; display: flex; flex: none; padding-top: 18px; }
.doc-well { width: 1488px; flex: none; display: flex; flex-direction: column; }
.doc-tabs { height: 25px; position: relative; display: flex; align-items: center; flex: none; }
.doc-tab { position: relative; top: -1px; margin-left: 15px; font-size: 15px; font-family: "Noto Sans", sans-serif; }
.doc-tab.second { margin-left: 63px; }
.active-mark { position: absolute; left: 313px; top: 0; width: 149px; height: 2px; background: #007acc; }
.doc-tools { margin-left: auto; display: flex; align-items: center; gap: 15px; padding-right: 1px; }
.doc-rule { height: 3px; background: #007acc; flex: none; margin-left: 8px; }
.nav-bar {
    height: 24px; flex: none; margin-left: 8px; display: flex; align-items: center; background: #2d2d30;
    font-family: "Noto Sans", sans-serif; font-size: 15px; position: relative;
    padding-left: 6px;
}
.cs-icon { width: 16px; height: 16px; border: 1px solid #6b9e4e; margin-right: 5px; font-size: 9px; font-weight: 700; line-height: 14px; text-align: center; color: #d0d0d0; background: #333337; flex: none; white-space: nowrap; }
.nav-caret { margin-left: auto; margin-right: 8px; border-top-color: #77777a; }
.split-btn { width: 20px; height: 24px; background: #1e1e1e; display: flex; align-items: center; justify-content: center; }
.editor { height: 552px; flex: none; display: flex; margin-left: 9px; overflow: hidden; background: #1e1e1e; }
.ind-margin { width: 21px; background: #333337; flex: none; }
.gutter { width: 66px; position: relative; flex: none; }
.lines { margin-top: -8px; padding-left: 17px; color: #2b91af; font-family: "Liberation Mono", monospace; font-size: 15.500px; letter-spacing: -1.500px; }
.lines span { display: block; height: 20px; line-height: 20px; }
.lines .after-lens { margin-top: 17px; }
.wrench { position: absolute; left: 41px; top: 387px; width: 22px; height: 22px; }
.change-bar { width: 6px; background: #587c2f; flex: none; }
.outline { width: 21px; position: relative; flex: none; }
.outline::before { content: ""; position: absolute; left: 9px; top: 0; bottom: 0; width: 1px; background: #a0a0a0; }
.outline::after { content: ""; position: absolute; left: 20px; top: 0; bottom: 0; border-left: 1px dashed #666; }
.tick { position: absolute; left: 10px; width: 5px; height: 1px; background: #a0a0a0; }
.t1 { top: 150px; } .t2 { top: 170px; } .t3 { top: 347px; } .t4 { top: 387px; } .t5 { top: 87px; }
.fold { position: absolute; left: 5px; width: 9px; height: 9px; background: #1e1e1e; border: 1px solid #a0a0a0; }
.fold::after { content: ""; position: absolute; left: 1px; top: 3px; width: 5px; height: 1px; background: #d0d0d0; }
.f1 { top: 213px; } .f2 { top: 253px; } .f3 { top: 430px; }
.code { flex: 1; position: relative; }
.line-box { position: absolute; left: -6px; right: 3px; top: 388px; height: 19px; border: 2px solid #3a3a3a; }
.ed-scroll { width: 20px; background: #3e3e42; position: relative; flex: none; display: flex; flex-direction: column; align-items: center; justify-content: space-between; padding: 8px 0; }
.tri-up { width: 0; height: 0; border-left: 6px solid transparent; border-right: 6px solid transparent; border-bottom: 6px solid #77777a; display: block; }
.tri-down { width: 0; height: 0; border-left: 6px solid transparent; border-right: 6px solid transparent; border-top: 6px solid #77777a; display: block; }
.ed-green { position: absolute; left: 0; top: 23px; width: 4px; height: 450px; background: #5a7d32; }
.ed-thumb { position: absolute; left: 5px; top: 345px; width: 13px; height: 100px; background: #686868; }
.ed-dot { position: absolute; left: 14px; top: 258px; width: 5px; height: 5px; background: #9a9a9a; }
.ed-caret { position: absolute; left: -2px; top: 382px; width: 22px; height: 2px; background: #e8e8e8; }
.ed-status { height: 26px; flex: none; display: flex; align-items: center; margin-left: 9px; background: #333337; padding-right: 10px; }
.zoom-box { width: 74px; height: 22px; margin-left: 1px; background: #2d2d30; border: 1px solid #3f3f46; display: flex; align-items: center; justify-content: space-between; padding: 0 7px 0 3px; font-size: 14px; font-family: "Noto Sans", sans-serif; color: #e8e8e8; }
.ok-icon { margin-left: 29px; }
.ok-text { margin-left: 5px; }
.eol { margin-left: auto; width: 27px; color: #d0d0d0; font-size: 13px; font-family: "Noto Sans", sans-serif; }
.eol.crlf { margin-left: 24px; width: 33px; }

/* 진단 도구 */
.diag { width: 383px; margin-left: 9px; flex: none; display: flex; flex-direction: column; height: 626px; border: 1px solid #3f3f46; }
.pane-head { height: 28px; flex: none; display: flex; align-items: center; padding: 0 7px 0 4px; color: #d0d0d0; background: #2d2d30; }
.diag .pane-head { height: 26px; }
.pane-title { flex: none; font-size: 15px; margin-right: 14px; }
.dots {
    flex: 1; height: 8px; margin-right: 12px;
    background-image: radial-gradient(#46464a 1px, transparent 1.200px);
    background-size: 4px 4px;
}
.pin { width: 12px; height: 16px; margin: 0 11px 0 13px; }
.close { width: 12px; height: 12px; }
.diag-body { height: 357px; flex: none; display: flex; overflow: hidden; }
.diag-left { flex: 1; min-width: 0; background: #252526; overflow: hidden; }
.diag-tools { height: 35px; background: #2d2d30; display: flex; align-items: center; }
.diag-tools .sep { height: 26px; }
.g1 { margin: 0 11px 0 11px; } .g2 { margin: 0 12px 0 8px; } .g3 { margin-left: 8px; } .g4 { margin-left: 12px; } .g5 { margin-left: 9px; }
.session { height: 25px; padding-left: 13px; line-height: 25px; font-weight: 700; font-size: 15.500px; color: #f0f0f0; }
.ruler { height: 29px; position: relative; border-top: 2px solid #3f3f46; border-bottom: 2px solid #3f3f46; color: #a8a8a8; font-size: 14.500px; font-family: "Noto Sans", "Noto Sans CJK KR", sans-serif; letter-spacing: -.5px; }
.ruler::before { content: ""; position: absolute; left: 130px; top: 0; bottom: 0; width: 1px; background: #3f3f46; box-shadow: 155px 0 #3f3f46; }
.ruler-l1 { position: absolute; left: 134px; top: 3px; }
.ruler-l2 { position: absolute; left: 289px; top: 3px; }
.handle { position: absolute; top: -1px; bottom: -1px; width: 7px; background: #f0f0f0; }
.h1 { left: 40px; } .h2 { left: 314px; }
.track-head { height: 26px; display: flex; align-items: center; padding-left: 20px; font-weight: 700; font-size: 14.500px; color: #e8e8e8; position: relative; white-space: nowrap; }
.open-tri { width: 0; height: 0; border-left: 10px solid transparent; border-bottom: 10px solid #a0a0a0; margin-right: 6px; margin-left: -13px; }
.legend { position: absolute; left: 0; top: 0; height: 100%; width: 100%; }
.lg-tag { position: absolute; left: 244px; top: 6px; width: 8px; height: 14px; }
.lg-tri { position: absolute; left: 267px; top: 6px; width: 15px; height: 12px; }
.lg-dot { position: absolute; left: 297px; top: 6px; width: 15px; height: 15px; }
.track { display: flex; position: relative; padding-left: 44px; }
.plot { width: 271px; flex: none; background: #252526; border: 1px solid #46464a; overflow: hidden; }
.track-ev { height: 27px; }
.ev-plot { height: 27px; background: linear-gradient(90deg, transparent 85px, #333336 85px 86px, transparent 86px 240px, #333336 240px 241px, transparent 241px); }
.ev-icon { position: absolute; left: 22px; top: 6px; width: 13px; height: 13px; border: 2px solid #d8d8d8; border-left-width: 3px; border-right-width: 3px; background: linear-gradient(90deg, transparent 2.500px, #d8d8d8 2.500px 4.500px, transparent 4.500px); }
.track-mem { height: 87px; }
.track-cpu { height: 87px; }
.mem-plot, .cpu-plot { height: 87px; }
.axis { position: absolute; top: 0; height: 87px; display: flex; flex-direction: column; justify-content: space-between; padding: 3px 0 1px; font-size: 15px; font-family: "Noto Sans", sans-serif; color: #e0e0e0; }
.axis.left { left: 14px; width: 26px; text-align: right; }
.axis.right { left: 321px; text-align: left; }
.track-mem .axis { padding-bottom: 0; }
.diag-scroll { width: 20px; flex: none; background: #3e3e42; display: flex; flex-direction: column; align-items: center; }
.chev { width: 16px; height: 10px; margin: 12px 0; flex: none; }
.diag-thumb { width: 19px; height: 262px; background: #686868; flex: none; }
.diag-summary { flex: 1; border-top: 4px solid #2d2d30; background: #252526; }
.sum-tabs { height: 32px; display: flex; align-items: flex-end; border-bottom: 3px solid #3f3f46; padding-left: 5px; color: #e8e8e8; background: #252526; }
.sum-tabs span { padding: 0 8px; height: 25px; line-height: 24px; margin-right: 2px; white-space: nowrap; letter-spacing: .4px; }
.sum-tabs .on { background: #333337; width: 44px; margin-right: 0; letter-spacing: 0; }
.sum-head { height: 29px; padding-left: 12px; line-height: 28px; font-weight: 700; font-size: 14.500px; border-bottom: 1px solid #3f3f46; color: #e8e8e8; }
.sum-row { height: 36px; display: flex; align-items: center; font-size: 14.500px; border-bottom: 1px solid #3f3f46; color: #e0e0e0; }
.sum-row.no-line { border-bottom: 0; }
.sum-ic { width: 18px; height: 14px; margin: 0 10px 0 18px; }

/* 세로 탭 */
.side-tabs { width: 40px; flex: none; position: relative; display: flex; flex-direction: column; padding-left: 3px; }
.side-tab { writing-mode: vertical-rl; text-orientation: sideways; color: #d0d0d0; width: 29px; font-size: 16px; display: flex; align-items: center; white-space: nowrap; position: relative; }
.side-tab::after { content: ""; position: absolute; right: -8px; top: 0; bottom: 0; width: 8px; background: #3f3f46; }
.side-tab.one { height: 95px; }
.side-tab.two { height: 90px; margin-top: 15px; }

/* 하단 패널 */
.lower { flex: 1; display: flex; min-height: 0; padding: 5px 40px 0 8px; gap: 9px; }
.tool-pane { display: flex; flex-direction: column; min-width: 0; }
.auto-pane { width: 928px; flex: none; }
.stack-pane { flex: 1; }
.tool-pane .pane-head { border: 1px solid #3f3f46; border-bottom: 0; }
.tool-pane .pane-title { color: #d0d0d0; }
.auto-search { height: 26px; background: #333337; color: #77777a; padding-left: 7px; line-height: 26px; flex: none; border: 1px solid #3f3f46; }
.auto-body { flex: 1; display: flex; background: #2a2a2c; min-height: 0; position: relative; }
.col-head { height: 25px; margin-top: 4px; flex: 1; color: #6d6d70; padding-left: 18px; line-height: 25px; border-top: 1px solid #333336; border-bottom: 1px solid #333336; }
.pane-scroll { width: 22px; background: #333337; flex: none; display: flex; flex-direction: column; justify-content: flex-end; align-items: center; padding: 8px 0; }
.pane-scroll.tall { justify-content: space-between; width: 20px; background: #3e3e42; }
.stack-body { flex: 1; display: flex; background: #2a2a2c; min-height: 0; }
.stack-main { flex: 1; }
.col-head.lang { margin-top: 0; height: 26px; text-align: right; padding-right: 5px; border-top: 0; color: #6d6d70; }
.pane-tabs { height: 32px; flex: none; display: flex; align-items: stretch; border-top: 1px solid #3f3f46; color: #d0d0d0; }
.pane-tabs span { padding: 0 7px; line-height: 22px; white-space: nowrap; }
.pane-tabs .on { color: #0097fb; background: #252526; border: 1px solid #3f3f46; border-top: 0; }
.auto-pane .pane-tabs span + span { margin-left: 2px; }
.stack-pane .pane-tabs span + span { margin-right: 5px; letter-spacing: .4px; }

/* 상태 표시줄 */
.statusbar { height: 30px; flex: none; display: flex; align-items: center; background: #ca5100; color: #fff; }
.ready-ic { width: 20px; height: 14px; margin-left: 5px; }
.ready { margin-left: 11px; }
.up-ic { width: 12px; height: 16px; margin-left: auto; }
.src { margin-left: 12px; letter-spacing: .8px; }
.caret-up { margin-left: 8px; width: 0; height: 0; border-left: 5px solid transparent; border-right: 5px solid transparent; border-bottom: 5px solid #fff; }
.bell { width: 18px; height: 20px; margin: 0 22px 0 30px; }
.taskbar { height: 9px; flex: none; display: flex; background: #1a2c42; position: relative; overflow: hidden; font-size: 13px; }
.tk-start { width: 60px; background: #1c3a4a; }
.tk-search { width: 430px; background: #f2f2f2; }
.tk-gap { width: 64px; }
.tk-active { width: 56px; background: #3d5a68; }
.tk-clock { position: absolute; left: 1776px; top: 5px; color: #fff; white-space: nowrap; }

/* 탐색기 */
.explorer {
    position: absolute; left: 147px; top: 120px; width: 1222px; height: 742px;
    background: #fff; color: #000; display: flex; flex-direction: column; font-size: 15px;
}
.ex-title { height: 38px; flex: none; display: flex; align-items: flex-end; position: relative; }
.qa-folder { width: 13px; height: 17px; margin: 0 0 10px 13px; }
.qa-folder.two { margin-left: 11px; }
.qa-sep { width: 1px; height: 16px; background: #999; margin: 0 0 11px 10px; }
.qa-doc { width: 15px; height: 19px; margin: 0 0 9px 15px; }
.qa-caret { width: 6px; height: 6px; margin: 0 0 13px 14px; background: linear-gradient(#333 0 1px, transparent 1px 2px, transparent 2px); position: relative; }
.qa-caret::after { content: ""; position: absolute; left: 0; top: 2px; border-left: 3px solid transparent; border-right: 3px solid transparent; border-top: 4px solid #333; }
.qa-sep.last { margin-left: 14px; }
.manage { width: 100px; height: 33px; margin-left: 126px; background: #f1f17d; text-align: center; line-height: 34px; color: #222; }
.ex-name { margin: 0 0 9px 14px; color: #222; }
.ex-win { position: absolute; right: 24px; top: 13px; display: flex; gap: 44px; }
.ex-win svg { width: 14px; height: 14px; }
.ex-ribbon { height: 31px; flex: none; display: flex; position: relative; border-bottom: 2px solid #dadbdc; }
.rb { height: 28px; line-height: 27px; text-align: center; color: #333; flex: none; }
.rb.on { width: 70px; margin-left: 1px; background: #0063b1; color: #fff; }
.rb.home { width: 48px; }
.rb.share { width: 60px; margin-left: 4px; margin-right: 5px; }
.rb.view { width: 60px; }
.rb.photo { width: 100px; margin-left: 5px; border-left: 1px solid #dadbdc; border-right: 1px solid #dadbdc; }
.rb-chev { position: absolute; left: 1176px; top: 13px; width: 12px; height: 7px; }
.help { position: absolute; left: 1202px; top: 6px; width: 18px; height: 18px; border-radius: 50%; background: #0a74d0; color: #fff; font-weight: 700; font-size: 13px; text-align: center; line-height: 18px; font-family: "Liberation Sans", sans-serif; }
.ex-addr { height: 52px; flex: none; display: flex; align-items: flex-start; padding-top: 5px; }
.nav-btns { width: 136px; height: 38px; flex: none; display: flex; align-items: center; padding-top: 2px; }
.nb.back { width: 16px; height: 14px; margin-left: 16px; }
.nb.fwd { width: 16px; height: 14px; margin-left: 23px; }
.nb.drop { width: 8px; height: 6px; margin-left: 18px; }
.nb.up { width: 12px; height: 18px; margin-left: 15px; }
.addr-bar { width: 672px; height: 38px; flex: none; display: flex; align-items: center; background: linear-gradient(90deg, #83d794 0 76%, #b5ecbe 83%, #83d794 90%); color: #222; border: 1px solid #c5e6cc; border-right: 0; font-size: 15px; padding-top: 2px; }
.addr-folder { width: 12px; height: 16px; margin-left: 4px; }
.crumb { width: 6px; height: 6px; border-top: 1px solid #777; border-right: 1px solid #777; transform: rotate(45deg); margin: 0 12px 0 13px; flex: none; }
.addr-drop { width: 12px; height: 7px; margin-left: auto; }
.addr-x { width: 38px; height: 38px; margin: -2px 0 -1px 13px; border-left: 1px solid #6fb680; display: flex; align-items: center; justify-content: center; background: linear-gradient(90deg, #83d794 0 30px, #e7f6ea 30px); }
.addr-x svg { width: 14px; height: 14px; }
.ex-search { width: 388px; height: 38px; margin-left: 13px; flex: none; border: 2px solid #d9d9d9; display: flex; align-items: center; gap: 16px; padding: 2px 0 0 16px; color: #6d6d6d; }
.ex-main { height: 591px; flex: none; display: flex; overflow: hidden; }
.tree { width: 249px; flex: none; padding-top: 19px; overflow: hidden; font-size: 15px; color: #1a1a1a; }
.tree-row { height: 30.200px; display: flex; align-items: center; padding-left: 42px; position: relative; white-space: nowrap; letter-spacing: .9px; }
.tree-row.en { letter-spacing: -.2px; }
.tree-row.top { padding-left: 33px; }
.tic { width: 18px; height: 18px; margin-right: 6px; }
.tree-row.drive { margin-top: 10px; }
.tree-row.mypc { margin-top: 9px; }
.tree-row.sel { background: #d9d9d9; }
.pinned { position: absolute; left: 230px; width: 14px; height: 14px; }
.vbar { width: 20px; flex: none; background: #f0f0f0; display: flex; flex-direction: column; align-items: center; }
.sb-arrow { width: 10px; height: 6px; margin: 7px 0; flex: none; }
.sb-arrow.h { width: 6px; height: 10px; margin: 5px 7px; }
.vthumb { width: 100%; background: #cdcdcd; flex: none; }
.tree-thumb { height: 455px; margin-bottom: auto; }
.list-wrap { width: 581px; margin-left: 5px; flex: none; display: flex; flex-direction: column; }
.list { height: 571px; flex: none; overflow: hidden; }
.list-head, .file { display: grid; grid-template-columns: 199px 126px 101px 100px 55px; }
.list-head { height: 30px; color: #4c607a; }
.list-head span { padding-left: 8px; line-height: 31px; border-right: 1px solid #e5e5e5; position: relative; }
.list-head span:first-child { padding-left: 21px; }
.list-head span:last-child { border-right: 0; }
.sort { position: absolute; left: 46px; top: 0; width: 10px; height: 5px; }
.file { height: 27px; color: #6d6d6d; align-items: center; position: relative; top: -1px; }
.file > span { padding-left: 8px; white-space: nowrap; letter-spacing: -.25px; }
.fname { display: flex; align-items: center; gap: 6px; color: #111; padding-left: 24px !important; letter-spacing: -.6px !important; }
.fic { width: 18px; height: 18px; }
.fsize { text-align: right; padding-right: 9px; }
.hbar { height: 20px; flex: none; background: #f0f0f0; display: flex; align-items: center; }
.hthumb { width: 480px; height: 100%; background: #cdcdcd; margin-right: auto; }
.list-bar { height: 571px; align-self: flex-start; }
.list-space { flex: 1; }
.list-thumb { height: 21px; }
.details { flex: 1; border-left: 1px solid #f0f0f0; padding: 11px 0 0 30px; margin-left: 1px; }
.det-count { font-size: 20.500px; line-height: 1.2; }
.det-folder { width: 68px; height: 102px; margin: 52px 0 0 22px; filter: drop-shadow(3px 2px 3px rgba(0,0,0,.12)); }
.ex-status { flex: 1; display: flex; align-items: center; padding-left: 18px; color: #333; font-size: 15px; }
.view-btn { width: 28px; height: 29px; display: flex; align-items: center; justify-content: center; flex: none; }
.view-btn.on { margin-left: auto; background: #cce8ff; border: 1px solid #99d1ff; }
.view-btn:last-child { width: 25px; margin-right: 9px; }
```
